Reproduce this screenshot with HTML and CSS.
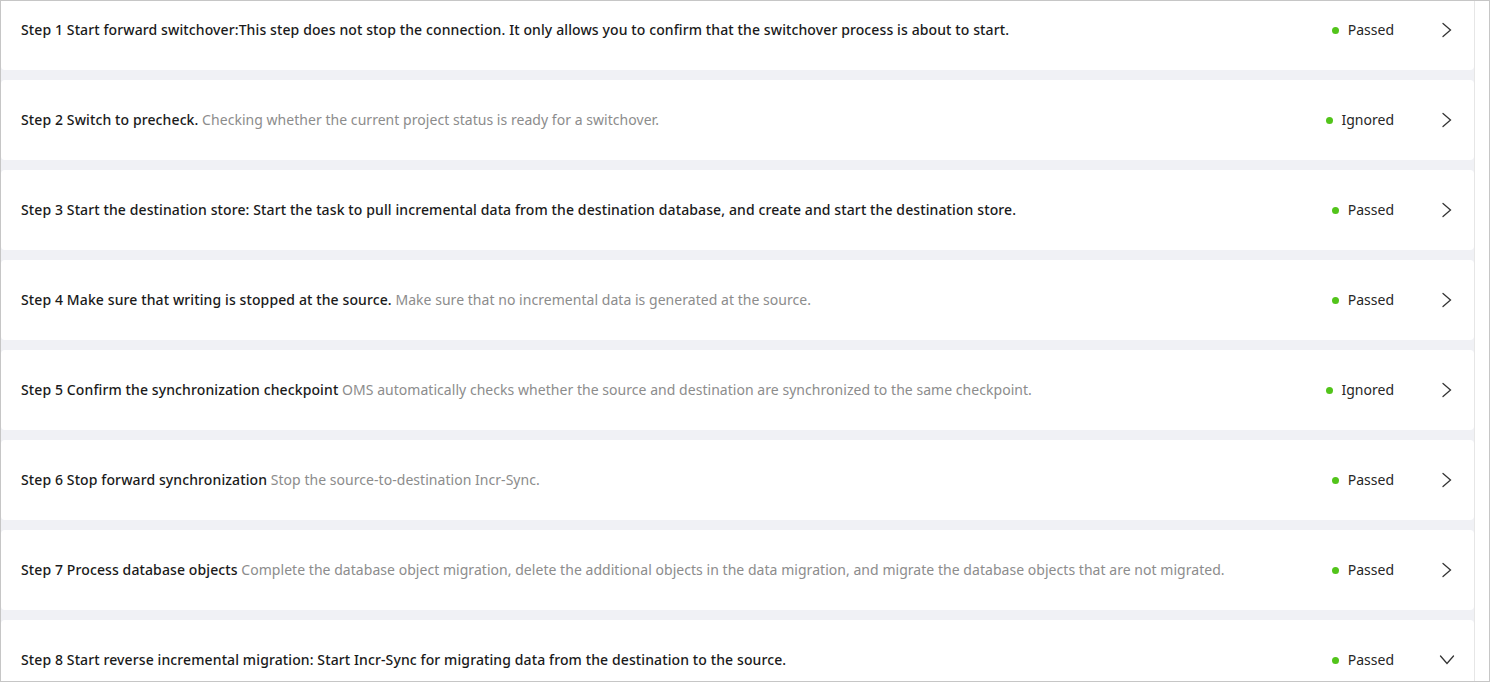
FILE: index.html
```html
<!DOCTYPE html>
<html lang="en">
<head>
<meta charset="utf-8">
<title>Switchover steps</title>
<link rel="stylesheet" href="styles.css">
</head>
<body>
<div class="frame">
  <div class="viewport">
    <ul class="steps">
      <li class="step">
        <div class="step-text"><span class="step-title">Step 1 Start forward switchover:This step does not stop the connection. It only allows you to confirm that the switchover process is about to start.</span></div>
        <div class="status"><span class="dot"></span>Passed</div>
        <svg class="chevron" viewBox="0 0 16 16"><path d="M4 1.5l7.5 6.5L4 14.5"/></svg>
      </li>
      <li class="step">
        <div class="step-text"><span class="step-title">Step 2 Switch to precheck.</span> <span class="step-desc">Checking whether the current project status is ready for a switchover.</span></div>
        <div class="status"><span class="dot"></span>Ignored</div>
        <svg class="chevron" viewBox="0 0 16 16"><path d="M4 1.5l7.5 6.5L4 14.5"/></svg>
      </li>
      <li class="step">
        <div class="step-text"><span class="step-title">Step 3 Start the destination store: Start the task to pull incremental data from the destination database, and create and start the destination store.</span></div>
        <div class="status"><span class="dot"></span>Passed</div>
        <svg class="chevron" viewBox="0 0 16 16"><path d="M4 1.5l7.5 6.5L4 14.5"/></svg>
      </li>
      <li class="step">
        <div class="step-text"><span class="step-title">Step 4 Make sure that writing is stopped at the source.</span> <span class="step-desc">Make sure that no incremental data is generated at the source.</span></div>
        <div class="status"><span class="dot"></span>Passed</div>
        <svg class="chevron" viewBox="0 0 16 16"><path d="M4 1.5l7.5 6.5L4 14.5"/></svg>
      </li>
      <li class="step">
        <div class="step-text"><span class="step-title">Step 5 Confirm the synchronization checkpoint</span> <span class="step-desc">OMS automatically checks whether the source and destination are synchronized to the same checkpoint.</span></div>
        <div class="status"><span class="dot"></span>Ignored</div>
        <svg class="chevron" viewBox="0 0 16 16"><path d="M4 1.5l7.5 6.5L4 14.5"/></svg>
      </li>
      <li class="step">
        <div class="step-text"><span class="step-title">Step 6 Stop forward synchronization</span> <span class="step-desc">Stop the source-to-destination Incr-Sync.</span></div>
        <div class="status"><span class="dot"></span>Passed</div>
        <svg class="chevron" viewBox="0 0 16 16"><path d="M4 1.5l7.5 6.5L4 14.5"/></svg>
      </li>
      <li class="step">
        <div class="step-text"><span class="step-title">Step 7 Process database objects</span> <span class="step-desc">Complete the database object migration, delete the additional objects in the data migration, and migrate the database objects that are not migrated.</span></div>
        <div class="status"><span class="dot"></span>Passed</div>
        <svg class="chevron" viewBox="0 0 16 16"><path d="M4 1.5l7.5 6.5L4 14.5"/></svg>
      </li>
      <li class="step">
        <div class="step-text"><span class="step-title">Step 8 Start reverse incremental migration: Start Incr-Sync for migrating data from the destination to the source.</span></div>
        <div class="status"><span class="dot"></span>Passed</div>
        <svg class="chevron" viewBox="0 0 16 16"><path d="M1.5 4l6.5 7.5L14.5 4"/></svg>
      </li>
    </ul>
  </div>
  <div class="scrollbar"></div>
</div>
</body>
</html>
```

FILE: styles.css
```css
* {
  box-sizing: border-box;
}

html, body {
  margin: 0;
  padding: 0;
  background: #ffffff;
}

body {
  font-family: "Noto Sans", "Liberation Sans", sans-serif;
  font-size: 14px;
  line-height: 20px;
  color: rgba(0, 0, 0, 0.85);
}

.frame {
  width: 1490px;
  height: 682px;
  border: 1px solid #c6c6c6;
  display: flex;
  overflow: hidden;
  background: #ffffff;
}

.viewport {
  flex: 1;
  background: #f0f1f5;
  overflow: hidden;
}

/* list is scrolled down a little, so the first card's top edge is out of view */
.steps {
  list-style: none;
  margin: -11px 0 0 0;
  padding: 0;
  display: flex;
  flex-direction: column;
  gap: 10px;
}

.step {
  height: 80px;
  flex: none;
  background: #ffffff;
  border-radius: 4px;
  display: flex;
  align-items: center;
  padding: 0 19px 0 20px;
}

.step-text {
  flex: 1;
  white-space: nowrap;
  overflow: hidden;
}

.step-title {
  font-weight: 500;
  letter-spacing: 0.11px;
  color: #1a1a1a;
}

.step-desc {
  color: #8c8c8c;
  letter-spacing: 0.04px;
}

.status {
  display: flex;
  align-items: center;
  gap: 9px;
  color: #262626;
}

.dot {
  width: 7px;
  height: 7px;
  border-radius: 50%;
  background: #52c41a;
}

.chevron {
  width: 16px;
  height: 16px;
  margin-left: 45px;
  fill: none;
  stroke: #333333;
  stroke-width: 1.3;
  stroke-linecap: round;
  stroke-linejoin: miter;
}

.scrollbar {
  width: 15px;
  flex: none;
  border-left: 1px solid #e6e6e6;
  background: #ffffff;
}
```
